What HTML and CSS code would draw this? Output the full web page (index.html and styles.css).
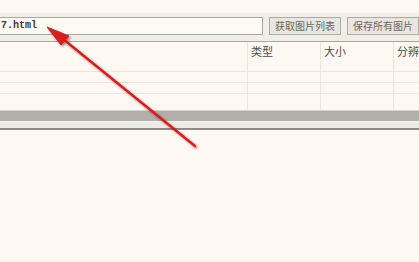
FILE: index.html
```html
<!DOCTYPE html>
<html lang="zh-CN">
<head>
  <meta charset="UTF-8">
  <meta name="viewport" content="width=device-width, initial-scale=1.0">
  <title>图片下载</title>
  <link rel="stylesheet" href="styles.css">
</head>
<body>
  <div class="top-gap"></div>

  <div class="toolbar">
    <div class="url-box">7.html</div>
    <button class="btn btn-list">获取图片列表</button>
    <button class="btn btn-save">保存所有图片</button>
  </div>

  <div class="list">
    <div class="list-head">
      <div class="cell"></div>
      <div class="cell">类型</div>
      <div class="cell">大小</div>
      <div class="cell">分辨率</div>
    </div>
    <div class="list-row blank">
      <div class="cell"></div><div class="cell"></div><div class="cell"></div><div class="cell"></div>
    </div>
    <div class="list-row">
      <div class="cell"></div><div class="cell"></div><div class="cell"></div><div class="cell"></div>
    </div>
    <div class="list-row">
      <div class="cell"></div><div class="cell"></div><div class="cell"></div><div class="cell"></div>
    </div>
    <div class="list-row last">
      <div class="cell"></div><div class="cell"></div><div class="cell"></div><div class="cell"></div>
    </div>
  </div>

  <div class="hscroll">
    <div class="hscroll-thumb"></div>
    <div class="hscroll-track"></div>
  </div>

  <!-- red annotation arrow drawn over the screenshot -->
  <svg class="annotation" width="419" height="262" viewBox="0 0 419 262">
    <defs>
      <filter id="shadow" x="-20%" y="-20%" width="140%" height="140%">
        <feDropShadow dx="1.5" dy="1.5" stdDeviation="1.2" flood-color="#000" flood-opacity="0.45"/>
      </filter>
    </defs>
    <g filter="url(#shadow)" fill="#d91f1c" stroke="#d91f1c">
      <line x1="195" y1="146" x2="63" y2="39" stroke-width="2.4" stroke-linecap="round"/>
      <polygon points="47,27 61,45 69,36" stroke-width="1" stroke-linejoin="round"/>
    </g>
  </svg>
</body>
</html>
```

FILE: styles.css
```css
* {
  box-sizing: border-box;
  margin: 0;
  padding: 0;
}

body {
  position: relative;
  width: 419px;
  height: 262px;
  overflow: hidden;
  background: #fdf8f2;
  font-family: "Noto Sans CJK SC", "Liberation Sans", sans-serif;
  font-size: 11px;
  color: #555;
}

.top-gap {
  height: 13px;
}

/* Toolbar with url box and two buttons */
.toolbar {
  display: flex;
  align-items: flex-start;
  gap: 6px;
  height: 28px;
  padding-top: 4px;
  background: #f1ede7;
}

.url-box {
  width: 266px;
  height: 18px;
  margin-left: -3px;
  padding-left: 3px;
  border: 1px solid #a9a59f;
  background: #fdf9f3;
  font-family: "Liberation Mono", monospace;
  font-size: 10px;
  font-weight: bold;
  line-height: 16px;
  color: #3a3a3a;
}

.btn {
  height: 18px;
  border: 1px solid #aeaaa4;
  background: #e9e5df;
  font-family: "Noto Sans CJK SC", sans-serif;
  font-size: 10px;
  line-height: 16px;
  color: #6a6661;
}

.btn-list {
  width: 72px;
}

.btn-save {
  width: 72px;
}

/* Image list */
.list {
  border-top: 1px solid #a8a49e;
}

.list-head,
.list-row {
  display: grid;
  grid-template-columns: 247px 73px 73px 1fr;
}

.list-head {
  height: 18px;
}

.list-head .cell {
  padding-left: 3px;
  line-height: 18px;
  color: #4e4b47;
}

.cell {
  border-left: 1px solid #ece6de;
  white-space: nowrap;
  overflow: hidden;
}

.cell:first-child {
  border-left: none;
}

.list-row {
  height: 11px;
  border-bottom: 1px solid #ece6de;
}

.list-row.blank {
  height: 12px;
}

.list-row.last {
  height: 16px;
  border-bottom: none;
}

/* Horizontal scrollbar */
.hscroll {
  border-top: 1px solid #d6d2cc;
}

.hscroll-thumb {
  height: 10px;
  background: #b2afaa;
}

.hscroll-track {
  height: 9px;
  background: #eeeae4;
  border-top: 1px solid #f8f5f0;
  border-bottom: 2px solid #8f8c88;
}

.annotation {
  position: absolute;
  top: 0;
  left: 0;
  pointer-events: none;
}
```
